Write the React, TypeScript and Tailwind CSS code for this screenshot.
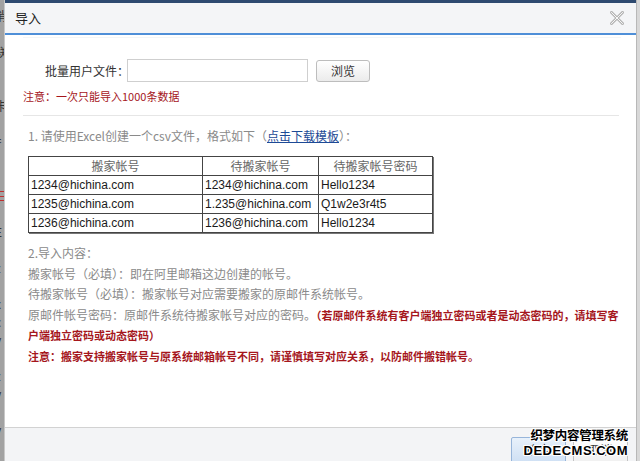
import React from "react";

const cjk = '"Noto Sans CJK SC", "Liberation Sans", sans-serif';
const latin = '"Liberation Sans", "Noto Sans CJK SC", sans-serif';

function CloseIcon() {
  return (
    <svg width="14" height="14" viewBox="0 0 14 14">
      <path d="M1.5 1.5 L12.5 12.5 M12.5 1.5 L1.5 12.5" stroke="#b4b4b4" strokeWidth="3" strokeLinecap="square" fill="none" />
      <path d="M1.5 1.5 L12.5 12.5 M12.5 1.5 L1.5 12.5" stroke="#f6f6f6" strokeWidth="1" strokeLinecap="square" fill="none" />
    </svg>
  );
}

const stripChars = ["消", "", "联", "", "", "卡", "", "扌", "", "", "三", "", "E", "f", "z", "t", "x", "c", "v", "l", "z", "y", "t", "v", "r", "]"];

const rows = [
  ["1234@hichina.com", "1234@hichina.com", "Hello1234"],
  ["1235@hichina.com", "1.235@hichina.com", "Q1w2e3r4t5"],
  ["1236@hichina.com", "1236@hichina.com", "Hello1234"],
];

export default function App() {
  return (
    <div className="w-[640px] h-[461px] flex bg-[#9a9a9a] overflow-hidden" style={{ fontFamily: cjk }}>
      {/* left page strip */}
      <div className="w-[5px] h-full bg-[#a2a2a2] overflow-hidden flex flex-col pt-[8px] gap-[2px] border-r border-[#c8c8c8]">
        {stripChars.map((c, i) => (
          <div key={i} className={`h-[16px] text-[12px] leading-[16px] ml-[-5px] ${c === "三" ? "text-[#c03030]" : "text-[#333]"}`}>
            {c || "\u00a0"}
          </div>
        ))}
      </div>

      {/* dialog */}
      <div className="w-[632px] h-full flex flex-col bg-white border-r border-[#b8b8b8]">
        <div className="h-[3px] bg-[#2e4a70]" />
        <div className="h-[30px] bg-[#f4f5f7] flex items-center justify-between pl-[10px] pr-[12px]">
          <span className="text-[13px] text-[#222]">导入</span>
          <CloseIcon />
        </div>
        <div className="h-[2px] bg-[#4e8fd8]" />

        <div className="flex-1 flex flex-col pl-[18px] pr-[15px] text-[12px]">
          <div className="h-px bg-[#f3f6f8] mt-[2px]" />
          {/* upload row */}
          <div className="mt-[21px] h-[23px] flex items-center pl-[22px]">
            <span className="w-[82px] shrink-0 whitespace-nowrap text-[12px] text-[#333]">批量用户文件：</span>
            <div className="w-[181px] shrink-0 h-[23px] border border-[#cfcfcf] bg-white" />
            <div className="ml-[8px] shrink-0 w-[54px] h-[22px] rounded-[3px] border border-[#bdbdbd] bg-gradient-to-b from-[#ffffff] to-[#ebebeb] flex items-center justify-center text-[12px] text-[#333]">
              浏览
            </div>
          </div>
          <div className="mt-[6px] h-[16px] leading-[16px] text-[11px] text-[#a5161c]">注意：一次只能导入1000条数据</div>
          <div className="mt-[11px] h-px bg-[#e6e6e6] mr-[2px]" />

          <div className="pl-[5px]">
            <div className="mt-[12px] h-[16px] leading-[16px] text-[12px] text-[#8a8a8a]">
              1. 请使用Excel创建一个csv文件，格式如下（
              <span className="text-[#1d4a96] underline">点击下载模板</span>）：
            </div>

            <table
              className="mt-[12px] border-collapse border-[1.5px] border-[#333] shadow-[1px_1px_0_#777]"
              style={{ fontFamily: latin }}
            >
              <colgroup>
                <col className="w-[174px]" />
                <col className="w-[116px]" />
                <col className="w-[114px]" />
              </colgroup>
              <thead>
                <tr className="h-[19px]">
                  {["搬家帐号", "待搬家帐号", "待搬家帐号密码"].map((h) => (
                    <th key={h} className="border border-[#444] font-normal text-[12px] text-[#666] text-center p-0" style={{ fontFamily: cjk }}>
                      {h}
                    </th>
                  ))}
                </tr>
              </thead>
              <tbody>
                {rows.map((r, i) => (
                  <tr key={i} className="h-[19px]">
                    {r.map((c, j) => (
                      <td key={j} className="border border-[#444] text-[12px] text-[#1a1a1a] px-[2px] py-0 leading-[17px]">
                        {c}
                      </td>
                    ))}
                  </tr>
                ))}
              </tbody>
            </table>

            <div className="mt-[10px] leading-[20.6px] text-[12px] text-[#8a8a8a] whitespace-nowrap">
              <div>2.导入内容：</div>
              <div>搬家帐号（必填）：即在阿里邮箱这边创建的帐号。</div>
              <div>待搬家帐号（必填）：搬家帐号对应需要搬家的原邮件系统帐号。</div>
              <div>
                原邮件帐号密码：原邮件系统待搬家帐号对应的密码。
                <span className="text-[11px] font-bold text-[#a5161c]">（若原邮件系统有客户端独立密码或者是动态密码的，请填写客</span>
              </div>
              <div className="text-[11px] font-bold text-[#a5161c]">户端独立密码或动态密码）</div>
              <div className="text-[11px] font-bold text-[#a5161c]">注意：搬家支持搬家帐号与原系统邮箱帐号不同，请谨慎填写对应关系，以防邮件搬错帐号。</div>
            </div>
          </div>
        </div>

        {/* footer */}
        <div className="relative h-[34px] border-t border-[#d2d2d2] bg-[#f3f4f6] flex justify-end items-start pt-[9px] pr-[8px] gap-[7px]">
          <div className="w-[55px] h-[26px] rounded-[2px] border border-[#97b5da] bg-gradient-to-b from-[#e8f1fb] to-[#cfe0f4] flex items-center justify-center text-[12px] text-[#333]">
            确定
          </div>
          <div className="w-[55px] h-[26px] rounded-[2px] border border-[#c3c3c3] bg-gradient-to-b from-[#ffffff] to-[#f0f0f0] flex items-center justify-center text-[12px] text-[#333]">
            取消
          </div>
          <div
            className="absolute right-[8px] top-[1px] flex flex-col items-end leading-none font-bold text-black pointer-events-none"
            style={{ textShadow: "1px 0 0 #fff, -1px 0 0 #fff, 0 1px 0 #fff, 0 -1px 0 #fff, 1px 1px 0 #fff, -1px -1px 0 #fff, 1px -1px 0 #fff, -1px 1px 0 #fff" }}
          >
            <span className="text-[12.5px] tracking-[-0.3px]" style={{ fontFamily: cjk }}>织梦内容管理系统</span>
            <span className="text-[13px] mt-[2px] tracking-[0.5px]" style={{ fontFamily: latin }}>DEDECMS.COM</span>
          </div>
        </div>
      </div>
      <div className="flex-1 bg-[#d8d8d8]" />
    </div>
  );
}
